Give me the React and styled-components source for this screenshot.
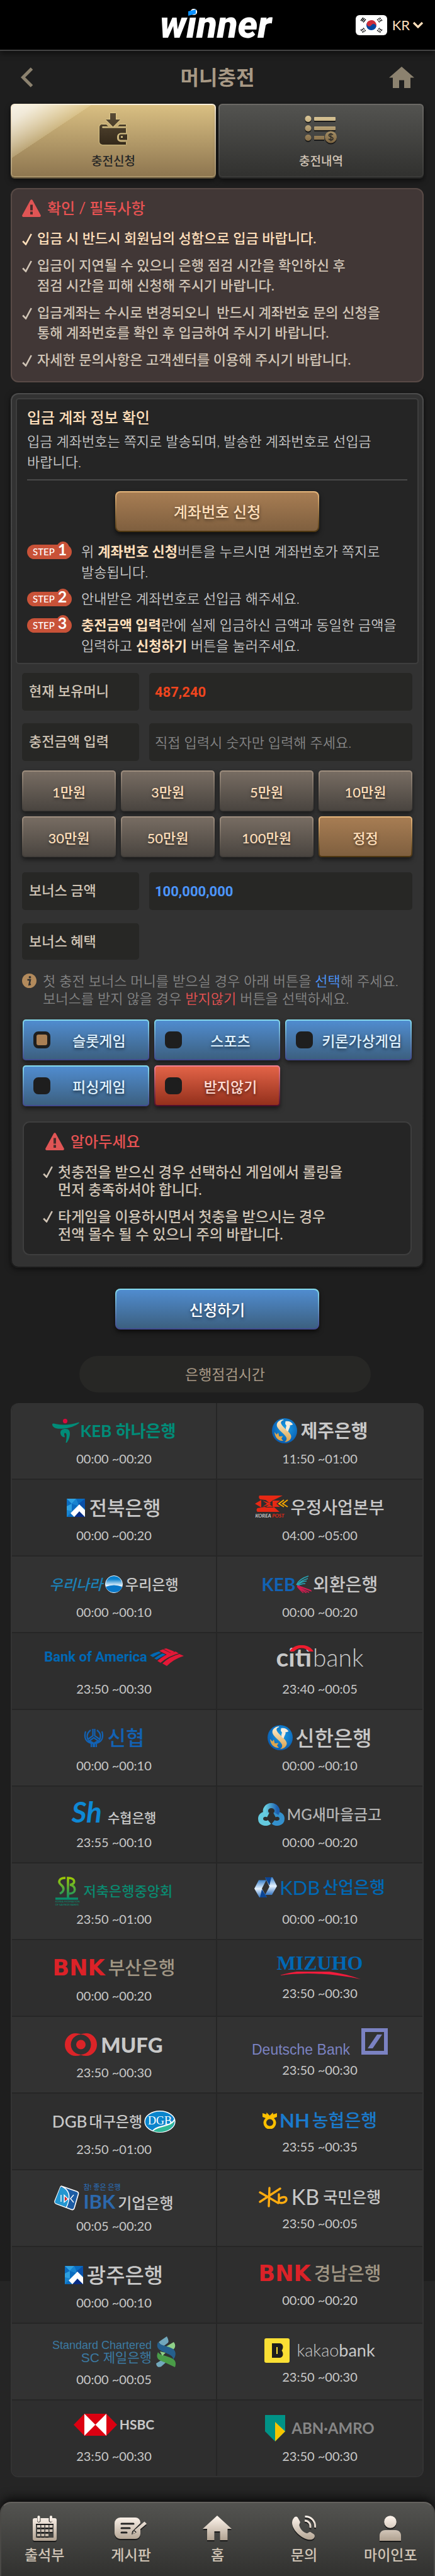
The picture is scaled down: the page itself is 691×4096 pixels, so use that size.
import React, { useState } from "react";
import styled, { createGlobalStyle, css } from "styled-components";

const color = {
  page: "#1e1e1e",
  pageEnd: "#252525",
  panel: "#323232",
  well: "#252525",
  field: "#272725",
  line: "#3e3e3e",
  beige: "#d0c4b5",
  peach: "#ffdfba",
  grey: "#c8c8c8",
  muted: "#848484",
  taupe: "#a89985",
  blue: "#4c96ff",
  red: "#e65252",
  logoGrey: "#c8c8c8",
};

const GlobalStyle = createGlobalStyle`
  *, *::before, *::after { box-sizing: border-box; }
  body {
    margin: 0;
    background: ${color.pageEnd};
    font-family: Lato, "Noto Sans CJK KR", sans-serif;
    font-size: 22px;
    color: ${color.beige};
  }
  button, input { font: inherit; color: inherit; }
  button { cursor: pointer; padding: 0; }
  a { color: inherit; text-decoration: none; }
  ul, ol { list-style: none; margin: 0; padding: 0; }
  h1, h2, p, fieldset { margin: 0; padding: 0; font-weight: inherit; }
  svg { display: block; flex: none; }
`;

const tones = {
  gold: ["#d9bf82", "#8e7650", "#fdf0da", "#a89268"],
  dark: ["#535350", "#31312f", "#6c6a66", "#3a3a38"],
  brown: ["#a77d53", "#7f5f3f", "#eab97e", "#4c3510"],
  stone: ["#776c62", "#4a4540", "#a09080", "#403c38"],
  blue: ["#508ccf", "#3c6080", "#86dcee", "#40488e"],
  red: ["#e26347", "#93301c", "#f28294", "#4c0c2a"],
};

const bevel = (tone) => {
  const [top, bottom, edgeTop, edgeBottom] = tones[tone];
  return css`
    border: 2px solid transparent;
    background:
      linear-gradient(${top}, ${bottom}) padding-box,
      linear-gradient(${edgeTop}, ${edgeBottom}) border-box;
  `;
};

const Page = styled.div`
  min-height: 100vh;
  display: flex;
  flex-direction: column;
  background: linear-gradient(${color.page}, ${color.page}) no-repeat 0 0 / 100% 3627px;
`;

const Header = styled.header`
  display: grid;
  grid-template-columns: 1fr auto 1fr;
  align-items: center;
  height: 81px;
  padding: 0 18px 0 12px;
  background: #000;
  border-bottom: 2px solid #444;
  box-shadow: 0 4px 8px rgba(0, 0, 0, 0.5);
`;

const Brand = styled.a`
  grid-column: 2;
  position: relative;
  font: italic 900 60px/61px Roboto, sans-serif;
  color: #fff;
  svg { position: absolute; left: 44px; top: 6px; }
`;

const LangButton = styled.button`
  justify-self: end;
  display: flex;
  align-items: center;
  border: 0;
  background: none;
  color: ${color.peach};
  line-height: 32px;
  span { margin: 0 4px 0 8px; }
`;

const TitleBar = styled.div`
  display: grid;
  grid-template-columns: 1fr auto 1fr;
  align-items: center;
  height: 84px;
  padding: 0 33px;
  color: #8c826f;
  a:last-child { justify-self: end; }
`;

const Title = styled.h1`
  font-size: 32px;
  line-height: 44px;
  font-weight: 700;
  color: ${color.taupe};
`;

const Main = styled.main`
  padding: 0 18px 0 17px;
`;

const Tabs = styled.nav`
  display: grid;
  grid-template-columns: 1fr 1fr;
  gap: 4px;
  margin-bottom: 17px;
`;

const Tab = styled.a`
  position: relative;
  display: flex;
  flex-direction: column;
  align-items: center;
  justify-content: space-between;
  height: 117px;
  padding: 12px 0 10px;
  border-radius: 6px;
  ${(p) => bevel(p.$active ? "gold" : "dark")}
  box-shadow: 0 2px 0 ${(p) => (p.$active ? "#5c4f38" : "#262625")}, 0 5px 8px rgba(0, 0, 0, 0.6);
  color: ${(p) => (p.$active ? "#262626" : color.beige)};
  font-size: 19px;
  line-height: 28px;
  font-weight: 500;
  ${(p) =>
    p.$active &&
    css`
      &::before {
        content: "";
        position: absolute;
        inset: 0;
        border-radius: 4px;
        background: linear-gradient(
            to bottom right,
            rgba(255, 255, 255, 0.8),
            rgba(255, 255, 255, 0.7) 15%,
            rgba(255, 244, 200, 0.2) 50%,
            transparent 50%
          )
          no-repeat 0 0 / 126px 84px;
      }
    `}
`;

const Notice = styled.section`
  margin-bottom: 17px;
  padding: 14px 16px 18px;
  border: 2px solid #584a46;
  border-radius: 12px;
  background: #413736;
`;

const AlertTitle = styled.h2`
  display: flex;
  align-items: center;
  gap: 10px;
  margin-bottom: ${(p) => p.$gap}px;
  padding-left: ${(p) => p.$indent || 0}px;
  font-size: 24px;
  line-height: ${(p) => p.$line}px;
  font-weight: 500;
  color: ${color.red};
`;

const CheckList = styled.ul`
  display: grid;
  gap: ${(p) => p.$gap}px;
  font-size: ${(p) => p.$size}px;
  line-height: ${(p) => p.$line}px;
  font-weight: 500;
`;

const CheckItem = styled.li`
  display: flex;
  gap: 8px;
  color: ${(p) => (p.$strong ? color.peach : "inherit")};
  white-space: pre-line;
  svg { margin-top: ${(p) => p.$drop}px; }
`;

const Panel = styled.form`
  padding: 6px 6px 18px;
  border-radius: 12px;
  border: 2px solid transparent;
  background:
    linear-gradient(${color.panel}, ${color.panel}) padding-box,
    linear-gradient(#4c4c4c, #1c1c1c) border-box;
  box-shadow: 0 2px 10px rgba(0, 0, 0, 0.6);
`;

const AccountBox = styled.section`
  padding: 12px 16px 11px;
  border: 2px solid ${color.line};
  border-radius: 5px;
  background: ${color.well};
  line-height: 33px;
  font-weight: 350;
  color: ${color.grey};
  h2 {
    margin-bottom: 5px;
    font-size: 24px;
    font-weight: 500;
    color: ${color.peach};
  }
`;

const Divider = styled.hr`
  margin: 11px 0 17px;
  border: 0;
  border-top: 2px solid #4a4a4a;
`;

const WideButton = styled.button`
  display: block;
  width: 324px;
  height: 65px;
  margin: 0 auto;
  border-radius: 8px;
  ${(p) => bevel(p.$tone)}
  box-shadow: 0 4px 7px rgba(0, 0, 0, 0.6);
  font-size: 24px;
  font-weight: 500;
  color: ${(p) => (p.$tone === "blue" ? "#fff" : color.peach)};
  text-shadow: 0 2px 5px rgba(0, 0, 0, 0.5);
`;

const Steps = styled.ol`
  display: grid;
  gap: 9px;
  margin-top: 14px;
`;

const Step = styled.li`
  display: grid;
  grid-template-columns: 86px 1fr;
  align-items: start;
  white-space: nowrap;
  strong { font-weight: 700; color: ${color.peach}; }
`;

const StepBadge = styled.span`
  position: relative;
  display: flex;
  align-items: center;
  gap: 5px;
  width: 71px;
  height: 23px;
  margin-top: 6px;
  padding-left: 9px;
  border-radius: 12px;
  background: #c85238;
  color: #fff;
  font-size: 15px;
  font-weight: 500;
  line-height: 23px;
  b {
    height: 27px;
    margin-top: -8px;
    font-size: 25px;
    line-height: 27px;
  }
  &::before {
    content: "";
    position: absolute;
    right: 4px;
    top: -5px;
    width: 20px;
    height: 20px;
    border-radius: 10px;
    background: #c85238;
  }
  span, b { position: relative; }
`;

const Fields = styled.div`
  padding: 14px 10px 0;
`;

const FieldRow = styled.div`
  display: grid;
  grid-template-columns: 186px 1fr;
  gap: 16px;
  height: 58px;
  margin-bottom: ${(p) => p.$after || 0}px;
  line-height: 58px;
`;

const FieldLabel = styled.label`
  padding-left: 11px;
  border-radius: 5px;
  background: ${color.field};
  font-weight: 500;
`;

const FieldValue = styled.output`
  padding: 2px 9px 0;
  border-radius: 5px;
  background: ${color.field};
  font-family: Roboto, sans-serif;
  font-weight: 700;
  color: ${(p) => p.$color};
`;

const AmountInput = styled.input`
  min-width: 0;
  padding: 2px 9px 0;
  border: 0;
  border-radius: 5px;
  background: ${color.field};
  font-weight: 350;
  &::placeholder { color: #858585; opacity: 1; }
`;

const QuickGrid = styled.div`
  display: grid;
  grid-template-columns: repeat(4, 1fr);
  gap: 8px;
  margin-bottom: 24px;
`;

const QuickButton = styled.button`
  height: 65px;
  border-radius: 5px;
  ${(p) => bevel(p.$tone)}
  box-shadow: 0 4px 7px rgba(0, 0, 0, 0.5);
  font-weight: 500;
  color: ${color.peach};
  text-shadow: 0 2px 5px rgba(0, 0, 0, 0.5);
`;

const Hint = styled.div`
  display: flex;
  gap: 10px;
  margin-bottom: 19px;
  line-height: 28px;
  font-weight: 350;
  color: ${color.muted};
  white-space: nowrap;
  svg { margin-top: 2px; }
`;

const Accent = styled.span`
  color: ${(p) => p.$color};
`;

const BonusGrid = styled.fieldset`
  display: grid;
  grid-template-columns: repeat(3, 1fr);
  gap: 8px;
  margin: 0 1px 24px;
  border: 0;
`;

const BonusOption = styled.label`
  display: flex;
  align-items: center;
  height: 65px;
  padding-left: 15px;
  border-radius: 5px;
  ${(p) => bevel(p.$tone)}
  box-shadow: 0 4px 7px rgba(0, 0, 0, 0.5);
  font-size: 23px;
  font-weight: 500;
  color: ${(p) => (p.$tone === "red" ? "#ffdcd4" : "#dff2ff")};
  text-shadow: 0 2px 5px rgba(0, 0, 0, 0.6);
  cursor: pointer;
  span { flex: 1; text-align: center; }
`;

const BonusRadio = styled.input`
  appearance: none;
  width: 27px;
  height: 27px;
  margin: 0;
  border: 5px solid ${color.page};
  border-radius: 8px;
  background: ${color.page};
  &:checked { background: #a97f54; }
`;

const InfoBox = styled.section`
  margin: 0 1px;
  padding: 16px 30px 18px;
  border: 2px solid ${color.line};
  border-radius: 11px;
  background: ${color.well};
`;

const Submit = styled.div`
  padding: 33px 0 42px;
`;

const Pill = styled.h2`
  margin: 0 84px 17px 109px;
  border-radius: 29px;
  background: #272725;
  font-size: 23px;
  line-height: 58px;
  text-align: center;
  color: ${color.taupe};
`;

const BankList = styled.ul`
  display: grid;
  grid-template-columns: 1fr 1fr;
  overflow: hidden;
  border: solid #333;
  border-width: 0 2px 2px;
  border-radius: 12px;
`;

const BankCell = styled.li`
  display: flex;
  flex-direction: column;
  align-items: center;
  height: 122px;
  padding-top: 14px;
  background: #2e2e2e;
  border-bottom: 2px solid #262626;
  &:nth-child(4n + 1), &:nth-child(4n + 2) { background: #323232; }
  &:nth-child(odd) { border-right: 2px solid #262626; }
  &:nth-last-child(-n + 2) { height: 120px; border-bottom: 0; }
`;

const Logo = styled.div`
  display: flex;
  align-items: center;
  gap: ${(p) => p.$gap ?? 6}px;
  height: ${(p) => (p.$short ? 56 : 60)}px;
  padding-bottom: ${(p) => (p.$raised ? 12 : 0)}px;
  white-space: nowrap;
`;

const Mark = styled.span`
  font-size: ${(p) => p.$size}px;
  line-height: ${(p) => p.$line || 36}px;
  font-weight: ${(p) => p.$weight || 500};
  font-family: ${(p) => p.$family || "inherit"};
  font-style: ${(p) => (p.$italic ? "italic" : "normal")};
  color: ${(p) => p.$color || color.logoGrey};
`;

const Stack = styled.div`
  display: flex;
  flex-direction: column;
  align-items: ${(p) => p.$align || "flex-start"};
`;

const Baseline = styled.div`
  display: flex;
  align-items: baseline;
  gap: ${(p) => p.$gap}px;
`;

const CitiMark = styled(Mark)`
  position: relative;
  svg { position: absolute; right: -3px; top: -1px; }
`;

const Time = styled.time`
  font-size: 20px;
  line-height: 28px;
  color: ${color.logoGrey};
`;

const BottomNav = styled.nav`
  display: grid;
  grid-template-columns: repeat(5, 1fr);
  height: 118px;
  margin-top: auto;
  border: solid #4a4946;
  border-width: 2px 2px 0;
  border-top-color: #64625e;
  border-radius: 18px 18px 0 0;
  background: linear-gradient(#535350, #31312f);
  box-shadow: 0 -6px 16px rgba(0, 0, 0, 0.7);
`;

const NavItem = styled.a`
  display: flex;
  flex-direction: column;
  align-items: center;
  gap: 6px;
  padding-top: 20px;
  font-size: 23px;
  line-height: 32px;
  font-weight: 500;
  svg { filter: drop-shadow(0 2px 0 #1a1a1a); }
`;

/* ---------- interface icons ---------- */

const Flag = () => (
  <svg width="50" height="32" viewBox="0 0 50 32">
    <rect width="50" height="32" rx="6" fill="#fff" />
    <g transform="rotate(33 25 16)">
      <path d="M17 16a8 8 0 0 1 16 0z" fill="#cd2e3a" />
      <path d="M17 16a8 8 0 0 0 16 0z" fill="#0047a0" />
      <circle cx="21" cy="16" r="4" fill="#cd2e3a" />
      <circle cx="29" cy="16" r="4" fill="#0047a0" />
    </g>
    <g stroke="#000" strokeWidth="1.3">
      <path d="M8 9l4-5M10 10l4-5M12 11.500l4-5" />
      <path d="M42 9l-4-5M40 10l-4-5M38 11.500l-4-5" strokeDasharray="2.600 1" />
      <path d="M8 23l4 5M10 22l4 5M12 20.500l4 5" strokeDasharray="2.600 1" />
      <path d="M42 23l-4 5M40 22l-4 5M38 20.500l-4 5" strokeDasharray="2.600 1" />
    </g>
  </svg>
);

const Chevron = () => (
  <svg width="18" height="11" viewBox="0 0 18 11">
    <path d="M2 2l7 7 7-7" fill="none" stroke="#ffdfba" strokeWidth="3.200" />
  </svg>
);

const BackIcon = () => (
  <svg width="20" height="32" viewBox="0 0 20 32">
    <path d="M17.500 2L3.500 16l14 14" fill="none" stroke="currentColor" strokeWidth="5" />
  </svg>
);

const HomeIcon = () => (
  <svg width="40" height="34" viewBox="0 0 40 34">
    <path d="M20 0L40 17.500H34V34H24V21.500H16V34H6V17.500H0z" fill="currentColor" />
  </svg>
);

const WalletIcon = () => (
  <svg width="46" height="54" viewBox="-1 -1 46 54" style={{ filter: "drop-shadow(0 0 1px #fff0a8)" }}>
    <defs>
      <linearGradient id="wallet" x1="0" y1="0" x2="0" y2="50" gradientUnits="userSpaceOnUse">
        <stop stopColor="#5a4c36" />
        <stop offset="1" stopColor="#34291a" />
      </linearGradient>
    </defs>
    <g fill="url(#wallet)">
      <path d="M17 0h9v10h7L21.500 21.500 10 10h7z" />
      <path d="M5 18h6l3 3H5a1.500 1.500 0 0 0 0 2.500h37v8h-8a6 6 0 0 0-6 6v2a6 6 0 0 0 6 6h8V50H5a5 5 0 0 1-5-5V22a4 4 0 0 1 5-4zM32 18h10v3H29z" />
      <path fillRule="evenodd" d="M34 33.500h10v9H34a3 3 0 0 1-3-3v-3a3 3 0 0 1 3-3zm0 3v2.500h3V36.500z" />
    </g>
  </svg>
);

const HistoryIcon = () => (
  <svg width="52" height="54" viewBox="0 -5 52 54" style={{ filter: "drop-shadow(0 2px 0 #1a1a1a)" }}>
    <defs>
      <linearGradient id="hist" x1="0" y1="0" x2="0" y2="44" gradientUnits="userSpaceOnUse">
        <stop stopColor="#dcc898" />
        <stop offset="1" stopColor="#7c6440" />
      </linearGradient>
    </defs>
    <g fill="url(#hist)">
      <circle cx="5.500" cy="5" r="5" />
      <circle cx="5.500" cy="20" r="5" />
      <circle cx="5.500" cy="35" r="5" />
      <rect x="15" y="2" width="34" height="6" rx="1" />
      <rect x="15" y="17" width="34" height="6" rx="1" />
      <path d="M15 32h16v6H15z" />
      <circle cx="41.500" cy="34" r="9.500" />
    </g>
    <path d="M45 30.500c-2-2.500-6.500-2-6.500.700 0 3 6.500 1.600 6.500 5 0 3-5 3.200-7 .6M41.600 27.500v13" fill="none" stroke="#33302a" strokeWidth="1.700" />
  </svg>
);

const WarningIcon = () => (
  <svg width="30" height="28" viewBox="0 0 30 28">
    <path d="M13.300 1.200a2 2 0 0 1 3.400 0L29.600 25a2 2 0 0 1-1.700 3H2.100A2 2 0 0 1 .4 25z" fill="#e05555" />
    <path d="M13 8.500h4V17.500h-4zM13 19.500h4V24h-4z" fill="#4a2c2c" />
  </svg>
);

const Check = () => (
  <svg width="16" height="19" viewBox="0 0 16 19">
    <path d="M1.200 12.500L6 17.500 14.800 1" fill="none" stroke="currentColor" strokeWidth="2.600" />
  </svg>
);

const InfoIcon = () => (
  <svg width="23" height="23" viewBox="0 0 23 23">
    <circle cx="11.500" cy="11.500" r="11.500" fill="#b28a5c" />
    <circle cx="12.500" cy="5.800" r="1.900" fill="#323232" />
    <path d="M8.500 10h4.500l-1.600 7.600 2.600-.6" fill="none" stroke="#323232" strokeWidth="2.500" />
  </svg>
);

const NavSvg = ({ width, children }) => (
  <svg width={width} height="40" viewBox={`0 0 ${width} 40`}>
    <defs>
      <linearGradient id="nav" x1="0" y1="0" x2="0" y2="40" gradientUnits="userSpaceOnUse">
        <stop stopColor="#fff6ee" />
        <stop offset="1" stopColor="#b0a190" />
      </linearGradient>
    </defs>
    <g fill="url(#nav)">{children}</g>
  </svg>
);

const navIcons = {
  calendar: (
    <NavSvg width={38}>
      <path fillRule="evenodd" d="M3 4h4v4a2.500 2.500 0 0 0 5.500 0V4h13v4a2.500 2.500 0 0 0 5.500 0V4h4a3 3 0 0 1 3 3v30a3 3 0 0 1-3 3H3a3 3 0 0 1-3-3V7a3 3 0 0 1 3-3zM5 13v22h28V13z" />
      <rect x="7.500" y="0" width="4" height="10" rx="2" />
      <rect x="27" y="0" width="4" height="10" rx="2" />
      <path d="M7 15h5v4H7zM13.500 15h5v4h-5zM20 15h5v4h-5zM26.500 15h5v4h-5zM7 22h5v4H7zM13.500 22h5v4h-5zM20 22h5v4h-5zM26.500 22h5v4h-5zM7 29h5v4H7zM13.500 29h5v4h-5zM20 29h5v4h-5z" />
    </NavSvg>
  ),
  board: (
    <NavSvg width={52}>
      <path fillRule="evenodd" d="M9 3h24a8 8 0 0 1 8 8v1L28 25l-1 5 6-2 8-8v9a8 8 0 0 1-8 8H9a9 9 0 0 1-9-9V12a9 9 0 0 1 9-9zm2 8.500a1.200 1.200 0 0 0 0 3h19a1.200 1.200 0 0 0 0-3zm0 7a1.200 1.200 0 0 0 0 3h13a1.200 1.200 0 0 0 0-3zm0 7a1.200 1.200 0 0 0 0 3h8a1.200 1.200 0 0 0 0-3z" />
      <path d="M47.500 9.500l3.500 3.500L35 26.500l-3.500-3.500zM30.500 24l3.500 3.500-5 1.500z" />
    </NavSvg>
  ),
  home: (
    <NavSvg width={46}>
      <path d="M23 0L46 21H39.500V39H27.500V25H18.500V39H7V21H0z" />
    </NavSvg>
  ),
  phone: (
    <NavSvg width={38}>
      <path d="M3 3.500C5 1 7.500.700 9.500 4l3 5.500c1 2-1.500 4-1 6.500 1.500 5.500 6 10.500 11.500 12 2.500.4 3.500-2.500 6-2l5.500 3.500c2.500 2 1.500 5.500-1 7.500C23 43.500-4 23 .5 8c.5-1.800 1.300-3.400 2.500-4.500z" />
      <path d="M20 8c6 0 10 5 9 11.500" fill="none" stroke="url(#nav)" strokeWidth="3" />
      <path d="M20.500 1.500C30 1 37.500 9 36.500 19" fill="none" stroke="url(#nav)" strokeWidth="3" />
    </NavSvg>
  ),
  user: (
    <NavSvg width={34}>
      <circle cx="17" cy="10" r="9.800" />
      <path d="M9 23h16c6 0 9 4 9 9v8H0v-8c0-5 3-9 9-9z" />
    </NavSvg>
  ),
};

/* ---------- bank marks ---------- */

const HanaMark = () => (
  <svg width="43" height="38" viewBox="0 0 43 38">
    <circle cx="20.500" cy="3.600" r="3.600" fill="#d9093c" />
    <g fill="#008c78">
      <path d="M0 9c0-2 3-1.500 6-.8 12 2.300 24 1.300 36-2.700 1.500 0 .8 1.200-.5 2.200-9 6-20 8.500-31.500 8C4 15.500 0 12.500 0 9z" />
      <path d="M13 22c0-4 3.500-6 8-6 5.500 0 7 3.500 7 7.500 0 5-2 10.500-5 14.500h-1.500c.8-5 1.500-9 1.200-12.500-.2-3.500-3.700-4-3.700-1 0 2.200 1.500 3 .7 4.800C16.500 29.500 13 26.500 13 22z" />
    </g>
  </svg>
);

const ShinhanMark = () => (
  <svg width="40" height="40" viewBox="0 0 40 40">
    <defs>
      <radialGradient id="shin" cx=".55" cy=".4" r=".6">
        <stop stopColor="#1aa0e8" />
        <stop offset="1" stopColor="#0a5cb0" />
      </radialGradient>
      <linearGradient id="shinS" x1="0" y1="0" x2="0" y2="1">
        <stop stopColor="#fff0d4" />
        <stop offset="1" stopColor="#d9a24c" />
      </linearGradient>
    </defs>
    <circle cx="20" cy="20" r="20" fill="url(#shin)" />
    <path d="M18 2C11 3 6.500 7.500 8 13c1.800 6 13 12.500 15 18 .8 3-.3 5-3 7 7-.5 11-5 10.500-9.500C29.500 22 17 15 14.500 8.500c-.8-2.500.5-4.500 4-5.500z" fill="url(#shinS)" />
    <path d="M4 22l3.500 4 2.500-3 1.500 6 6-.5-2.500 4 3 3.500C11 37 4.500 31 4 22z" fill="#dda64e" />
    <path d="M21.500 5c5-1 9 .5 12 5-2 0-2.500 2-5 1 1 4-2 5-2.500 10-4-1-5-4-3-9l-2-3z" fill="#f6ecdc" />
  </svg>
);

const JbMark = () => (
  <svg width="29" height="29" viewBox="0 0 29 29">
    <path d="M0 0h29v29H0z" fill="#0a6cc0" />
    <path d="M0 0h15L8 8zM0 12l8-4v12H0z" fill="#2ea0e0" />
    <path d="M15 0L8 8l12 4zM0 29V18l9 2z" fill="#1884d0" />
    <path d="M29 0v16L18 9z" fill="#0a50a8" />
    <path d="M12 29l8-9 9 9z" fill="#082c84" />
    <path d="M20 9L6 23l6 6 8-9 9 9V18z" fill="#fff" />
  </svg>
);

const PostMark = () => (
  <svg width="53" height="26" viewBox="0 0 53 26">
    <g fill="#e62814">
      <path d="M7 0h37L30 7H16L8 6Q5 3 7 0zM4 26q-3-3 0-6l12-2h14l9 8zM0 13l10-6v12zM12 8l7 5-7 5 14-5zM16 6h14l-7 6zM16 19h14l-7-5zM28 8h12l-6 5 6 5H28z" />
    </g>
    <path d="M46 7l-8 6 8 5M52 7l-8 6 8 5" fill="none" stroke="#f6a800" strokeWidth="2" />
  </svg>
);

const WooriMark = () => (
  <svg width="28" height="28" viewBox="0 0 28 28">
    <defs>
      <linearGradient id="woori" x1="0" y1="0" x2="0" y2="1">
        <stop offset=".2" stopColor="#0a80cc" />
        <stop offset=".62" stopColor="#fff" />
      </linearGradient>
    </defs>
    <circle cx="14" cy="14" r="13.500" fill="url(#woori)" stroke="#e8f4fc" />
    <path d="M1 18q13-5 26 0c-3 12-22 12-26 0z" fill="#0a78c8" />
  </svg>
);

const KebMark = () => (
  <svg width="26" height="28" viewBox="0 0 26 28" fill="none">
    <path d="M1 15C4 8 10 4 20 1M2 15C7 9 12 7 19 5M2 16c5-5 9-7 15-7M3 17c3-3 7-4 12-4" stroke="#28a8b8" strokeWidth="1.500" />
    <path d="M2 17l23 8M2 18l19 9M3 19l14 9M4 20l8 8M2 16l22 8" stroke="#d01c50" strokeWidth="1.500" />
  </svg>
);

const BoaMark = () => (
  <svg width="54" height="28" viewBox="0 0 54 28">
    <path d="M0 11Q7 7 14 5l4 2Q11 10 5 14zM7 16Q14 11 20 8l5 2Q17 14 11 18z" fill="#0068b5" />
    <path d="M15 4l6-2.500L34 8l-6 2.500zM22 1l4-1 13 5-5 2.500zM12 20Q24 9 41 5l5 3Q30 12 17 23zM20 24Q31 13 47 9l7 3Q38 17 27 28z" fill="#e31837" />
  </svg>
);

const CitiArc = () => (
  <svg width="38" height="10" viewBox="0 0 38 10">
    <path d="M0 10C7-3.500 31-3.500 38 10h-7C25 2.500 13 2.500 7 10z" fill="#ee1c2e" />
  </svg>
);

const ShinhyupMark = () => (
  <svg width="32" height="29" viewBox="0 0 32 29" fill="none" stroke="#1262b4" strokeWidth="2.200">
    <path d="M14.500 0v11L6 17M17.500 0v11l8.500 6M11 2C3 8 4 17 12 23v6M21 2c8 6 7 15-1 21v6M3 4C0 14 3 22 15 23.500V29M29 4c3 10 0 18-12 19.500V29M9 19l7-5 7 5-7 4z" />
  </svg>
);

const MgMark = () => (
  <svg width="42" height="36" viewBox="0 0 42 36">
    <defs>
      <linearGradient id="mg" x1="0" y1="0" x2="1" y2="0">
        <stop stopColor="#68cce0" />
        <stop offset="1" stopColor="#1c60b0" />
      </linearGradient>
    </defs>
    <g fill="none" strokeWidth="8">
      <path d="M16 19c-6-3-12 0-12 6 0 7 9 9 14 5" stroke="#64cade" />
      <path d="M26 19c6-3 12 0 12 6 0 7-9 9-14 5" stroke="#3490cc" />
      <path d="M13 17c-4-7 2-13 8-13s12 6 8 13" stroke="url(#mg)" />
    </g>
  </svg>
);

const SbMark = () => (
  <svg width="36" height="37" viewBox="0 0 36 37">
    <defs>
      <linearGradient id="sb" x1="0" y1="0" x2="0" y2="37" gradientUnits="userSpaceOnUse">
        <stop stopColor="#a4cc00" />
        <stop offset="1" stopColor="#008a70" />
      </linearGradient>
    </defs>
    <g fill="none" stroke="url(#sb)" strokeWidth="3.600">
      <path d="M16 2C5 2 4 9 9 13s6 10-2 14" />
      <path d="M20 36V2c12 0 13 10 3 11 10 1 11 14-1 14" />
      <path d="M0 35h36" />
    </g>
  </svg>
);

const KdbMark = () => (
  <svg width="36" height="32" viewBox="0 0 36 32">
    <defs>
      <linearGradient id="kdbA" x1="0" y1="0" x2="0" y2="1">
        <stop stopColor="#3c80c8" />
        <stop offset=".5" stopColor="#e8f4ff" />
        <stop offset="1" stopColor="#3474c0" />
      </linearGradient>
    </defs>
    <path d="M7 4.500h12L12 18l8 14H8L0 18z" fill="url(#kdbA)" />
    <path d="M17 0h12l7 14-8 14H17l7-13z" fill="url(#kdbA)" />
    <path d="M17 0h10l-3 13zM20 32H9l3-13z" fill="#0a4494" />
  </svg>
);

const MizuhoSwoosh = () => (
  <svg width="130" height="12" viewBox="0 0 130 12">
    <path d="M0 6Q62-12 130 12 62-2 0 6z" fill="#f01c3c" />
  </svg>
);

const MufgMark = () => (
  <svg width="51" height="36" viewBox="0 0 51 36">
    <path fillRule="evenodd" d="M17 0q5 0 8.500 1.500Q29 0 34 0a17 18 0 0 1 0 36q-5 0-8.500-1.500Q22 36 17 36a17 18 0 0 1 0-36zm8.500 2a16 16 0 1 0 .1 0z" fill="#dc2428" />
    <circle cx="25.500" cy="18" r="7.500" fill="#dc2428" />
  </svg>
);

const DeutscheMark = () => (
  <svg width="42" height="42" viewBox="0 0 42 42">
    <path d="M3 3h36v36H3z" fill="none" stroke="#7b82c2" strokeWidth="6" />
    <path d="M10 32L25 10h8L18 32z" fill="#7b82c2" />
  </svg>
);

const DgbMark = () => (
  <svg width="50" height="35" viewBox="0 0 50 35">
    <ellipse cx="25" cy="17.500" rx="24" ry="16.800" fill="#0a84cc" stroke="#fff" strokeWidth="1.400" />
    <path d="M14 33C22 22 44 26 48 14c1 10-8 20-24 20z" fill="#30b898" />
    <path d="M14 32C20 23 44 26 48 14" fill="none" stroke="#fff" strokeWidth="2" />
    <text x="6" y="22" fontFamily="Liberation Serif, serif" fontSize="18" fill="#fff">DGB</text>
  </svg>
);

const NhMark = () => (
  <svg width="23" height="27" viewBox="0 0 23 27">
    <path fillRule="evenodd" d="M0 2l6 2 .5-3L11.500 6l5-5 .5 3 6-2v6l-5 2a10 10 0 1 1-13 0L0 8zm11.500 9.500a5.500 5.500 0 1 0 .1 0z" fill="#fcc000" />
  </svg>
);

const IbkMark = () => (
  <svg width="40" height="40" viewBox="0 0 40 40">
    <path d="M10 2.500q1-2 3-1l23 8q3 1 2.500 4L32 36q-1 3-4 2.500L3 29q-2.500-1-2-4z" fill="#1c5ca4" stroke="#fff" strokeWidth="1.600" />
    <path d="M10 2.500q16 3 14 18-1 10-4 14L2 28q-1-1-.500-3z" fill="#2496d0" />
    <path d="M13 2q12 6 10.500 19Q22 31 19 35M11 15v11M16 15.500l6 6-6 5zM31 15l-5 6 5 6" fill="none" stroke="#fff" strokeWidth="1.400" />
    <path d="M17 17.500l4 4-4 3.500z" fill="#e02424" />
  </svg>
);

const KbMark = () => (
  <svg width="46" height="33" viewBox="0 0 46 33" fill="none" stroke="#ffac10" strokeWidth="3.400" strokeLinecap="round">
    <path d="M17 2l-1 29M2 9l29 17M34 3L2 24M32 12v13c5 2 12 0 12-5 0-4-6-5-11-1" />
  </svg>
);

const ScMark = () => (
  <svg width="32" height="49" viewBox="0 0 32 49">
    <path d="M5 9L18 0q4 7 2 10l-9 7zM1 43l8-5 8 3-8 7q-7 3-8-5z" fill="#72a8bc" />
    <path d="M17 16L29 9q4 5 1 10l-3 3z" fill="#90d088" />
    <path d="M4 9c-4 10 2 13 12 17 8 4 12 5 12 11 5-6 5-13 0-17C20 15 6 14 4 9z" fill="#255f8c" />
    <path d="M4 25c-4 9 0 13 10 16l17 8c2-6 1-10-3-13-9-6-21-5-24-11z" fill="#4a9c48" />
    <path d="M7 24l9 2-5 5z" fill="#90d088" />
  </svg>
);

const KakaoMark = () => (
  <svg width="40" height="39" viewBox="0 0 40 39">
    <rect width="40" height="39" rx="3" fill="#fadf34" />
    <path fillRule="evenodd" d="M12 8h12c6 0 7 7 3.500 11.500C31 24 30 31 24 31H12zm7 6v11h2V14z" fill="#1e1e1e" />
  </svg>
);

const HsbcMark = () => (
  <svg width="69" height="35" viewBox="0 0 69 35">
    <path d="M17 0h35v35H17z" fill="#fff" />
    <path d="M17 0h35L34.500 17.500zM17 35h35L34.500 17.500zM17 0v35L0 17.500zM52 0v35l17-17.500z" fill="#db0011" />
  </svg>
);

const AbnMark = () => (
  <svg width="32" height="42" viewBox="0 0 32 42">
    <path d="M0 0h32v26L16 42 0 26z" fill="#009286" />
    <path d="M16 11l16 15-16 16z" fill="#f5c400" />
  </svg>
);

/* ---------- content ---------- */

const serif = '"Liberation Serif", serif';
const wide = '"DejaVu Sans", sans-serif';
const grotesque = '"Liberation Sans", "Noto Sans CJK KR", sans-serif';

const banks = [
  { time: "00:00 ~00:20", gap: 2, logo: <><HanaMark /><Mark $size={26} $weight={700} $color="#008c78">KEB 하나은행</Mark></> },
  { time: "11:50 ~01:00", logo: <><ShinhanMark /><Mark $size={29} $weight={700}>제주은행</Mark></> },
  { time: "00:00 ~00:20", logo: <><JbMark /><Mark $size={31}>전북은행</Mark></> },
  {
    time: "04:00 ~05:00", gap: 3,
    logo: (
      <>
        <Stack>
          <PostMark />
          <Mark $size={8} $line={12} $weight={700} $italic>KOREA <Accent $color="#e62814">POST</Accent></Mark>
        </Stack>
        <Mark $size={27}>우정사업본부</Mark>
      </>
    ),
  },
  { time: "00:00 ~00:10", gap: 4, logo: <><Mark $size={23} $italic $color="#1c82b8">우리나라</Mark><WooriMark /><Mark $size={23}>우리은행</Mark></> },
  { time: "00:00 ~00:20", gap: 1, logo: <><Mark $size={28} $weight={700} $color="#1262b4">KEB</Mark><KebMark /><Mark $size={28}>외환은행</Mark></> },
  { time: "23:50 ~00:30", gap: 4, raised: true, logo: <><Mark $size={22} $weight={700} $family="Roboto, sans-serif" $color="#0068b5">Bank of America</Mark><BoaMark /></> },
  {
    time: "23:40 ~00:05", gap: 2, raised: true,
    logo: (
      <>
        <CitiMark $size={41} $weight={700}>citi<CitiArc /></CitiMark>
        <Mark $size={39} $weight={300}>bank</Mark>
      </>
    ),
  },
  { time: "00:00 ~00:10", logo: <><ShinhyupMark /><Mark $size={32} $color="#1262b4">신협</Mark></> },
  { time: "00:00 ~00:10", gap: 4, logo: <><ShinhanMark /><Mark $size={33}>신한은행</Mark></> },
  { time: "23:55 ~00:10", logo: <Baseline $gap={9}><Mark $size={46} $weight={700} $italic $color="#0e88d4">Sh</Mark><Mark $size={21}>수협은행</Mark></Baseline> },
  { time: "00:00 ~00:20", gap: 4, logo: <><MgMark /><Mark $size={24} $color="#b4b4b4">MG새마을금고</Mark></> },
  {
    time: "23:50 ~01:00",
    logo: (
      <>
        <Stack>
          <SbMark />
          <Mark $size={4} $line={5} $color="#0a8a70">KOREA FEDERATION</Mark>
          <Mark $size={4} $line={5} $color="#0a8a70">OF SAVINGS BANKS</Mark>
        </Stack>
        <Mark $size={22} $color="#0a8a70">저축은행중앙회</Mark>
      </>
    ),
  },
  { time: "00:00 ~00:10", raised: true, gap: 4, logo: <><KdbMark /><Mark $size={31} $weight={400} $color="#0068b5">KDB</Mark><Mark $size={27} $color="#0068b5">산업은행</Mark></> },
  { time: "00:00 ~00:20", gap: 5, logo: <><Mark $size={35} $weight={700} $family={wide} $color="#dc2228">BNK</Mark><Mark $size={29} $color="#a09684">부산은행</Mark></> },
  {
    time: "23:50 ~00:30", short: true,
    logo: (
      <Stack $align="center">
        <Mark $size={32} $line={28} $weight={700} $family={serif} $color="#0068b5">MIZUHO</Mark>
        <MizuhoSwoosh />
      </Stack>
    ),
  },
  { time: "23:50 ~00:30", logo: <><MufgMark /><Mark $size={33} $weight={900}>MUFG</Mark></> },
  { time: "23:50 ~00:30", short: true, logo: <Baseline $gap={18}><Mark $size={23} $line={28} $weight={400} $family={grotesque} $color="#7b82c2">Deutsche Bank</Mark><DeutscheMark /></Baseline> },
  { time: "23:50 ~01:00", gap: 3, logo: <><Mark $size={26}>DGB</Mark><Mark $size={23}>대구은행</Mark><DgbMark /></> },
  { time: "23:55 ~00:35", short: true, gap: 4, logo: <><NhMark /><Mark $size={31} $weight={700} $color="#1a7acc">NH</Mark><Mark $size={28} $color="#1a7acc">농협은행</Mark></> },
  {
    time: "00:05 ~00:20",
    logo: (
      <>
        <IbkMark />
        <Stack>
          <Mark $size={11} $line={12} $color="#2c68ac">참! 좋은 은행</Mark>
          <Baseline $gap={4}>
            <Mark $size={31} $line={32} $weight={700} $color="#2c68ac">IBK</Mark>
            <Mark $size={24} $line={32}>기업은행</Mark>
          </Baseline>
        </Stack>
      </>
    ),
  },
  { time: "23:50 ~00:05", short: true, logo: <><KbMark /><Mark $size={34} $weight={400}>KB</Mark><Mark $size={25}>국민은행</Mark></> },
  { time: "00:00 ~00:10", logo: <><JbMark /><Mark $size={33}>광주은행</Mark></> },
  { time: "00:00 ~00:20", short: true, gap: 5, logo: <><Mark $size={35} $weight={700} $family={wide} $color="#dc2228">BNK</Mark><Mark $size={29} $color="#a09684">경남은행</Mark></> },
  {
    time: "00:00 ~00:05",
    logo: (
      <>
        <Stack $align="flex-end">
          <Mark $size={18} $line={20} $weight={400} $family={grotesque} $color="#3c7aa2">Standard Chartered</Mark>
          <Mark $size={21} $line={20} $weight={400} $family={grotesque} $color="#3c7aa2">SC 제일은행</Mark>
        </Stack>
        <ScMark />
      </>
    ),
  },
  {
    time: "23:50 ~00:30", short: true, gap: 11,
    logo: <><KakaoMark /><Mark $size={27} $weight={300}>kakao<b>bank</b></Mark></>,
  },
  { time: "23:50 ~00:30", gap: 4, raised: true, logo: <><HsbcMark /><Mark $size={21} $weight={700}>HSBC</Mark></> },
  { time: "23:50 ~00:30", gap: 10, logo: <><AbnMark /><Mark $size={24} $weight={700} $color="#868686">ABN·AMRO</Mark></> },
];

const noticeItems = [
  "입금 시 반드시 회원님의 성함으로 입금 바랍니다.",
  "입금이 지연될 수 있으니 은행 점검 시간을 확인하신 후\n점검 시간을 피해 신청해 주시기 바랍니다.",
  "입금계좌는 수시로 변경되오니\u00a0 반드시 계좌번호 문의 신청을\n통해 계좌번호를 확인 후 입금하여 주시기 바랍니다.",
  "자세한 문의사항은 고객센터를 이용해 주시기 바랍니다.",
];

const infoItems = [
  "첫충전을 받으신 경우 선택하신 게임에서 롤링을\n먼저 충족하셔야 합니다.",
  "타게임을 이용하시면서 첫충을 받으시는 경우\n전액 몰수 될 수 있으니 주의 바랍니다.",
];

const quickAmounts = [
  ["1만원", 10000],
  ["3만원", 30000],
  ["5만원", 50000],
  ["10만원", 100000],
  ["30만원", 300000],
  ["50만원", 500000],
  ["100만원", 1000000],
];

const bonuses = ["슬롯게임", "스포츠", "키론가상게임", "피싱게임", "받지않기"];

const navItems = [
  ["출석부", "calendar"],
  ["게시판", "board"],
  ["홈", "home"],
  ["문의", "phone"],
  ["마이인포", "user"],
];

const StepLabel = ({ n }) => (
  <StepBadge>
    <span>STEP</span>
    <b>{n}</b>
  </StepBadge>
);

export default function App() {
  const [amount, setAmount] = useState(0);
  const [bonus, setBonus] = useState("슬롯게임");

  return (
    <Page>
      <GlobalStyle />
      <Header>
        <Brand href="#home">
          winner
          <svg width="14" height="10" viewBox="0 0 14 10">
            <path d="M1 3L13 0V7L1 10z" fill="#0a90ff" />
          </svg>
        </Brand>
        <LangButton type="button">
          <Flag />
          <span>KR</span>
          <Chevron />
        </LangButton>
      </Header>

      <TitleBar>
        <a href="#back" aria-label="뒤로"><BackIcon /></a>
        <Title>머니충전</Title>
        <a href="#home" aria-label="홈"><HomeIcon /></a>
      </TitleBar>

      <Main>
        <Tabs>
          <Tab href="#request" $active><WalletIcon />충전신청</Tab>
          <Tab href="#history"><HistoryIcon />충전내역</Tab>
        </Tabs>

        <Notice>
          <AlertTitle $line={32} $gap={16}><WarningIcon />확인 / 필독사항</AlertTitle>
          <CheckList $gap={11} $size={22} $line={32}>
            {noticeItems.map((text, i) => (
              <CheckItem key={text} $strong={i === 0} $drop={8}><Check />{text}</CheckItem>
            ))}
          </CheckList>
        </Notice>

        <Panel onSubmit={(e) => e.preventDefault()} id="deposit">
          <AccountBox>
            <h2>입금 계좌 정보 확인</h2>
            <p>입금 계좌번호는 쪽지로 발송되며, 발송한 계좌번호로 선입금<br />바랍니다.</p>
            <Divider />
            <WideButton type="button" $tone="brown">계좌번호 신청</WideButton>
            <Steps>
              <Step>
                <StepLabel n={1} />
                <span>위 <strong>계좌번호 신청</strong>버튼을 누르시면 계좌번호가 쪽지로<br />발송됩니다.</span>
              </Step>
              <Step>
                <StepLabel n={2} />
                <span>안내받은 계좌번호로 선입금 해주세요.</span>
              </Step>
              <Step>
                <StepLabel n={3} />
                <span><strong>충전금액 입력</strong>란에 실제 입금하신 금액과 동일한 금액을<br />입력하고 <strong>신청하기</strong> 버튼을 눌러주세요.</span>
              </Step>
            </Steps>
          </AccountBox>

          <Fields>
            <FieldRow $after={22}>
              <FieldLabel htmlFor="balance">현재 보유머니</FieldLabel>
              <FieldValue id="balance" $color="#f0451e">487,240</FieldValue>
            </FieldRow>
            <FieldRow $after={17}>
              <FieldLabel htmlFor="amount">충전금액 입력</FieldLabel>
              <AmountInput
                id="amount"
                inputMode="numeric"
                placeholder="직접 입력시 숫자만 입력해 주세요."
                value={amount || ""}
                onChange={(e) => setAmount(Number(e.target.value.replace(/\D/g, "")))}
              />
            </FieldRow>
            <QuickGrid>
              {quickAmounts.map(([label, value]) => (
                <QuickButton key={label} type="button" $tone="stone" onClick={() => setAmount(amount + value)}>
                  {label}
                </QuickButton>
              ))}
              <QuickButton type="button" $tone="brown" onClick={() => setAmount(0)}>정정</QuickButton>
            </QuickGrid>
            <FieldRow $after={23}>
              <FieldLabel htmlFor="bonus-amount">보너스 금액</FieldLabel>
              <FieldValue id="bonus-amount" $color={color.blue}>100,000,000</FieldValue>
            </FieldRow>
            <FieldRow $after={20}>
              <FieldLabel as="span" id="bonus-label">보너스 혜택</FieldLabel>
            </FieldRow>
            <Hint>
              <InfoIcon />
              <p>
                첫 충전 보너스 머니를 받으실 경우 아래 버튼을 <Accent $color={color.blue}>선택</Accent>해 주세요.<br />
                보너스를 받지 않을 경우 <Accent $color={color.red}>받지않기</Accent> 버튼을 선택하세요.
              </p>
            </Hint>
            <BonusGrid aria-labelledby="bonus-label">
              {bonuses.map((name) => (
                <BonusOption key={name} $tone={name === "받지않기" ? "red" : "blue"}>
                  <BonusRadio type="radio" name="bonus" checked={bonus === name} onChange={() => setBonus(name)} />
                  <span>{name}</span>
                </BonusOption>
              ))}
            </BonusGrid>
            <InfoBox>
              <AlertTitle $line={28} $gap={20} $indent={4}><WarningIcon />알아두세요</AlertTitle>
              <CheckList $gap={15} $size={23} $line={28}>
                {infoItems.map((text) => (
                  <CheckItem key={text} $drop={5}><Check />{text}</CheckItem>
                ))}
              </CheckList>
            </InfoBox>
          </Fields>
        </Panel>

        <Submit>
          <WideButton type="submit" form="deposit" $tone="blue">신청하기</WideButton>
        </Submit>

        <Pill>은행점검시간</Pill>
        <BankList>
          {banks.map(({ time, logo, gap, raised, short }, i) => (
            <BankCell key={i}>
              <Logo $gap={gap} $raised={raised} $short={short}>{logo}</Logo>
              <Time>{time}</Time>
            </BankCell>
          ))}
        </BankList>
      </Main>

      <BottomNav>
        {navItems.map(([label, icon]) => (
          <NavItem key={label} href={`#${icon}`}>{navIcons[icon]}{label}</NavItem>
        ))}
      </BottomNav>
    </Page>
  );
}
